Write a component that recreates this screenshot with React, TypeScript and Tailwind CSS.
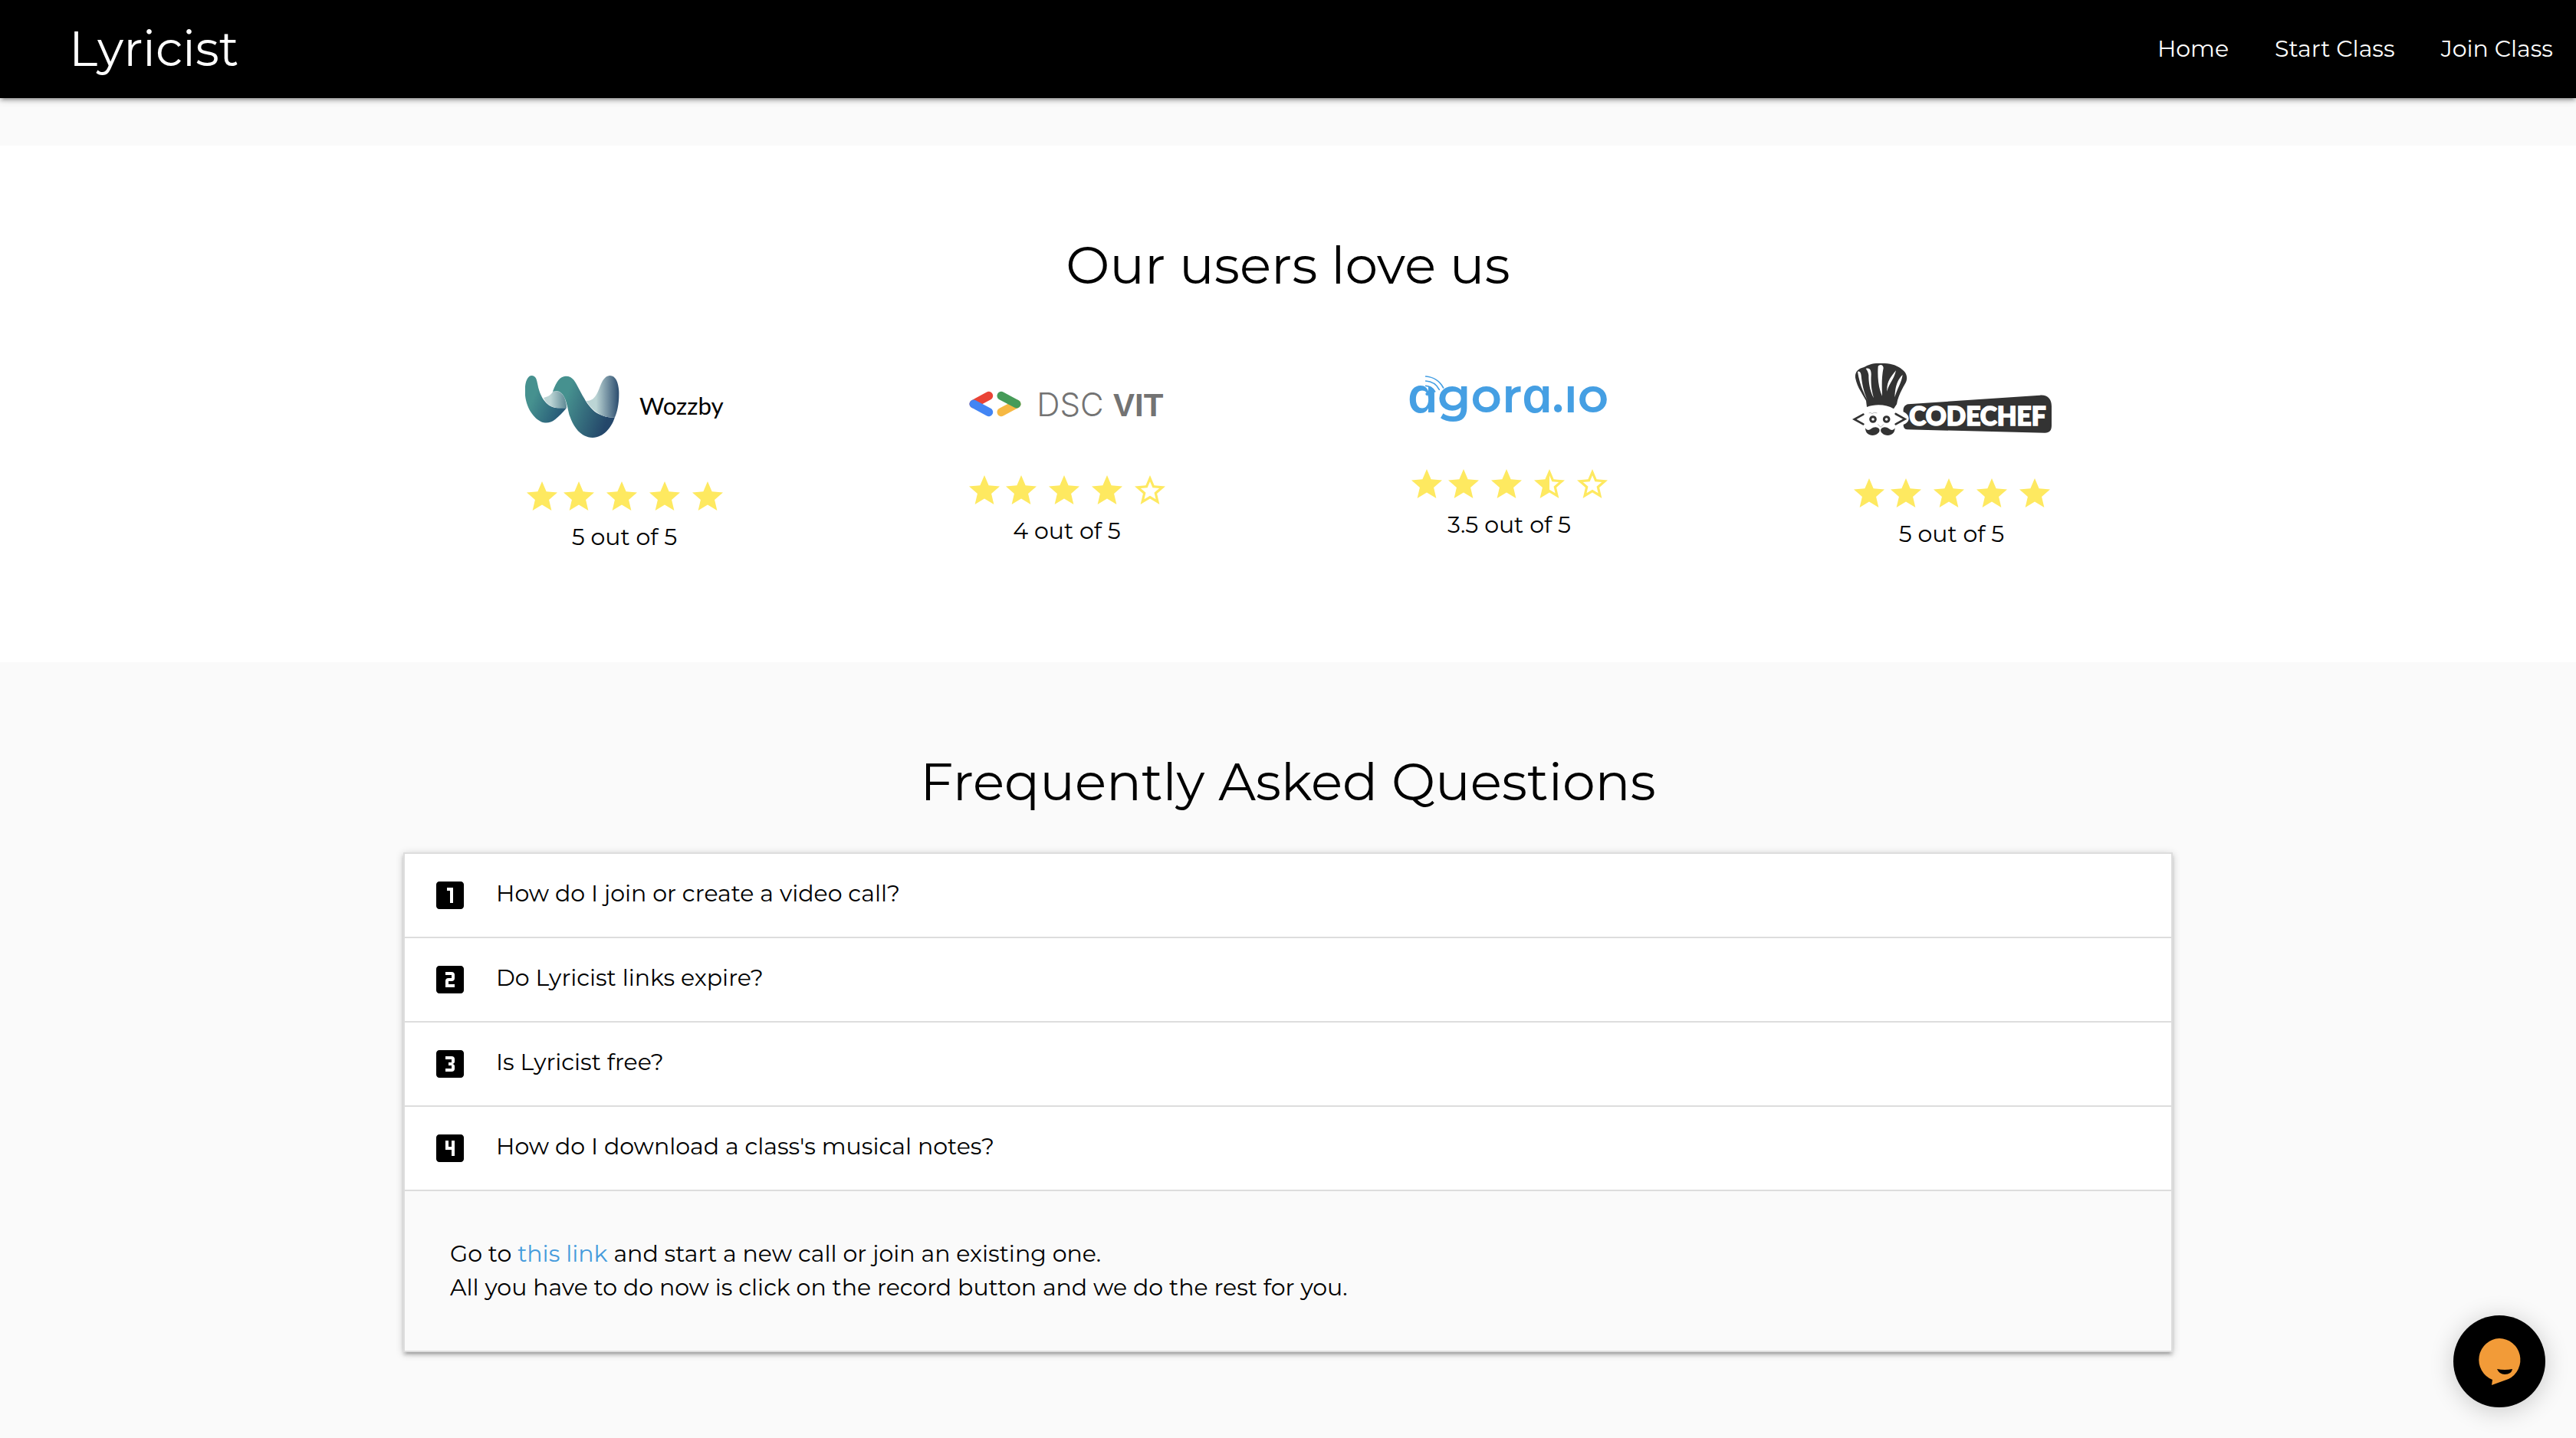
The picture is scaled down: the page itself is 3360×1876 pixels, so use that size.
import { useState } from "react";
import type { ComponentType, ReactNode } from "react";
import {
  MdLooks3,
  MdLooks4,
  MdLooksOne,
  MdLooksTwo,
  MdStar,
  MdStarBorder,
  MdStarHalf,
} from "react-icons/md";

interface Review {
  name: string;
  logo: ReactNode;
  rating: number;
}

interface Question {
  icon: ComponentType<{ className?: string }>;
  title: string;
}

function WozzbyLogo() {
  return (
    <svg viewBox="73 42 780 294" className="w-[260px]" role="img" aria-label="Wozzby">
      <defs>
        <linearGradient id="wz-left" x1="0" y1="0" x2="1" y2="0.5">
          <stop offset="0.35" stopColor="#46918f" />
          <stop offset="1" stopColor="#285c78" />
        </linearGradient>
        <linearGradient id="wz-main" x1="0" y1="0" x2="1" y2="0.35">
          <stop offset="0.3" stopColor="#46918f" />
          <stop offset="1" stopColor="#24476a" />
        </linearGradient>
        <linearGradient id="wz-light" x1="0" y1="0" x2="1" y2="0">
          <stop offset="0.3" stopColor="#bcd5d5" />
          <stop offset="1" stopColor="#5d8894" />
        </linearGradient>
        <linearGradient id="wz-right" x1="0" y1="0" x2="1" y2="0">
          <stop offset="0.3" stopColor="#bcd5d5" />
          <stop offset="1" stopColor="#2b4c6e" />
        </linearGradient>
      </defs>
      <path
        d="M72 150C72 110 85 90 98 90C115 90 118 105 122 125C128 160 150 215 200 217L235 217C220 235 205 250 190 262C175 275 160 276 145 274C110 265 72 215 72 150Z"
        fill="url(#wz-left)"
      />
      <path
        d="M145 177C165 172 175 165 183 150C205 148 222 158 230 185C234 200 236 210 235 217L205 217C175 217 155 200 145 177Z"
        fill="url(#wz-light)"
      />
      <path
        d="M181 152C195 115 208 93 232 92C260 92 270 115 285 145C305 185 330 225 360 240C385 252 405 256 424 253C410 295 380 332 337 333C290 333 262 290 248 250C238 220 235 165 205 152C195 149 188 150 181 152Z"
        fill="url(#wz-main)"
      />
      <path
        d="M312 189C345 190 355 160 367 130C378 100 392 90 405 90C430 90 441 125 440 165C440 200 433 235 424 253C400 258 370 247 350 232C335 220 322 205 312 189Z"
        fill="url(#wz-right)"
      />
      <text x="520" y="243" fontSize="94" className="font-[Lato,sans-serif]">
        Wozzby
      </text>
    </svg>
  );
}

function DscLogo() {
  return (
    <svg viewBox="64 42 780 270" className="w-[260px]" role="img" aria-label="DSC VIT">
      <g strokeWidth="33" strokeLinecap="round">
        <path d="M147 169L88 201" stroke="#ea4335" />
        <path d="M88 201L147 233" stroke="#4285f4" />
        <path d="M256 201L196 233" stroke="#f6b843" />
        <path d="M196 169L256 201" stroke="#469b58" />
      </g>
      <text x="335" y="250" fontSize="126" fill="#737373" className="font-[Inter,sans-serif] font-light">
        DSC
      </text>
      <text x="634" y="250" fontSize="126" fill="#737373" className="font-['Liberation_Sans',sans-serif] font-bold">
        VIT
      </text>
    </svg>
  );
}

function AgoraLogo() {
  return (
    <svg viewBox="85 42 780 246" className="w-[260px] overflow-visible" role="img" aria-label="agora.io">
      <text x="76" y="235" fontSize="188" fill="#459fe3" className="font-[Montserrat,sans-serif] font-semibold">
        <tspan className="font-[Inter,sans-serif] [font-feature-settings:'cv11']">a</tspan>
        gor
        <tspan className="font-[Inter,sans-serif] [font-feature-settings:'cv11']">a</tspan>
        .ıo
      </text>
      <g fill="none" strokeLinecap="round">
        <path d="M147 120A60 60 0 0 1 192 150" stroke="#fff" strokeWidth="14" />
        <path d="M147 93A86 86 0 0 1 216 138" stroke="#459fe3" strokeWidth="5" />
        <path d="M147 111A64 64 0 0 1 200 145" stroke="#459fe3" strokeWidth="5" />
        <path d="M147 130A45 45 0 0 1 183 153" stroke="#459fe3" strokeWidth="5" />
      </g>
      <circle cx="152" cy="162" r="6" fill="#459fe3" />
    </svg>
  );
}

function CodechefLogo() {
  return (
    <svg viewBox="76 72 780 282" className="w-[260px]" role="img" aria-label="CodeChef">
      <g fill="#333">
        <path d="M88 128C86 105 100 93 120 88C140 78 150 72 180 72C220 70 250 78 270 95C290 108 294 130 285 148C270 175 255 200 250 232L238 250C210 232 165 230 133 243L130 218C115 190 95 165 88 128Z" />
        <path d="M295 232L810 197C840 194 856 212 856 240L856 315C856 335 848 344 830 344L290 331C280 330 276 322 276 312C304 302 304 275 276 262C274 245 282 234 295 232Z" />
        <path d="M127 325C127 345 140 354 155 354C172 353 186 342 182 330C176 319 160 319 150 328C142 335 133 335 127 325Z" />
        <path d="M243 325C243 345 230 354 215 354C198 353 184 342 188 330C194 319 210 319 220 328C228 335 237 335 243 325Z" />
      </g>
      <g fill="#fff">
        <path d="M97 105C104 100 110 108 111 120C114 150 120 185 138 222C118 185 104 150 97 105Z" />
        <path d="M129 93C145 88 151 100 150 118C148 155 152 180 160 208C142 175 140 140 140 118C138 105 134 98 129 93Z" />
        <path d="M177 84C183 75 197 76 198 90C190 130 192 165 193 200C178 170 174 120 177 84Z" />
        <path d="M247 100C228 125 210 140 212 182C220 150 240 135 247 100Z" />
        <path d="M273 117C268 150 254 165 242 205C243 165 253 135 273 117Z" />
      </g>
      <g fill="none" stroke="#333" strokeLinecap="round">
        <path d="M119 272L84 291L119 310M246 270L282 290L246 310" strokeWidth="8" />
        <circle cx="157" cy="291" r="10" strokeWidth="9" />
        <circle cx="210" cy="291" r="10" strokeWidth="9" />
        <path d="M176 311L188 322L198 311M142 266Q148 262 153 269Q160 262 172 266" strokeWidth="1" />
      </g>
      <text x="299" y="315" fontSize="100" fill="#fff" stroke="#fff" strokeWidth="5" className="font-[Lato,sans-serif] font-black">
        CODECHEF
      </text>
    </svg>
  );
}

const reviews: Review[] = [
  { name: "Wozzby", logo: <WozzbyLogo />, rating: 5 },
  { name: "DSC VIT", logo: <DscLogo />, rating: 4 },
  { name: "agora.io", logo: <AgoraLogo />, rating: 3.5 },
  { name: "CodeChef", logo: <CodechefLogo />, rating: 5 },
];

const questions: Question[] = [
  { icon: MdLooksOne, title: "How do I join or create a video call?" },
  { icon: MdLooksTwo, title: "Do Lyricist links expire?" },
  { icon: MdLooks3, title: "Is Lyricist free?" },
  { icon: MdLooks4, title: "How do I download a class's musical notes?" },
];

function Star({ value }: { value: number }) {
  if (value >= 1) return <MdStar className="size-12" />;
  if (value > 0) return <MdStarHalf className="size-12" />;
  return <MdStarBorder className="size-12" />;
}

function ReviewCard({ review }: { review: Review }) {
  return (
    <div className="flex flex-col items-center">
      {review.logo}
      <div className="mt-[52px] flex gap-2 text-[#fee960]">
        {/* the first two stars sit tight together */}
        <div className="flex">
          <Star value={review.rating} />
          <Star value={review.rating - 1} />
        </div>
        <Star value={review.rating - 2} />
        <Star value={review.rating - 3} />
        <Star value={review.rating - 4} />
      </div>
      <p className="mt-[7px]">{review.rating} out of 5</p>
    </div>
  );
}

function Faq() {
  const [open, setOpen] = useState(3);

  return (
    <div className="border-x-2 border-t-2 border-[#ddd] shadow-[0_4px_4px_rgba(0,0,0,0.14),0_6px_2px_-4px_rgba(0,0,0,0.12),0_2px_10px_rgba(0,0,0,0.2)]">
      {questions.map((q, i) => (
        <div key={q.title}>
          <button
            type="button"
            aria-expanded={open === i}
            onClick={() => setOpen(open === i ? -1 : i)}
            className="flex h-[110px] w-full cursor-pointer items-start border-b-2 border-[#ddd] bg-white px-[29px] pt-[30px] text-left"
          >
            <span className="mr-[30px] flex w-[60px] justify-center">
              <q.icon className="size-12" />
            </span>
            {q.title}
          </button>
          {open === i && (
            <div className="border-b-2 border-[#ddd] bg-[#fafafa] px-[59px] py-[60px]">
              <p>
                Go to <a href="#start" className="text-[#459bdc]">this link</a> and start a new call or join an existing one.
                <br />
                All you have to do now is click on the record button and we do the rest for you.
              </p>
            </div>
          )}
        </div>
      ))}
    </div>
  );
}

function App() {
  return (
    <div className="min-h-screen bg-[#fafafa] font-[Montserrat,Inter,sans-serif] text-[30px] leading-11 text-black">
      <header className="relative flex h-32 items-center justify-between bg-black pl-[90px] text-white shadow-[0_4px_4px_rgba(0,0,0,0.14),0_6px_2px_-4px_rgba(0,0,0,0.12),0_2px_10px_rgba(0,0,0,0.2)]">
        <a href="#home" className="text-[63px] leading-[128px]">Lyricist</a>
        <nav className="flex leading-[128px]">
          <a href="#home" className="px-[30px]">Home</a>
          <a href="#start" className="px-[30px]">Start Class</a>
          <a href="#join" className="px-[30px]">Join Class</a>
        </nav>
      </header>

      <main className="pt-[62px]">
        <section className="bg-white pt-[118px] pb-[141px]">
          <div className="mx-auto w-[70%] px-[22px]">
            <h2 className="text-center text-[68px] leading-[75px]">Our users love us</h2>
            <div className="mt-[91px] grid grid-cols-4">
              {reviews.map((review) => (
                <ReviewCard key={review.name} review={review} />
              ))}
            </div>
          </div>
        </section>

        <section className="pt-[118px]">
          <div className="mx-auto w-[70%] px-[22px]">
            <h2 className="mb-[55px] text-center text-[68px] leading-[75px]">Frequently Asked Questions</h2>
            <Faq />
          </div>
        </section>
      </main>

      <button
        type="button"
        aria-label="Open chat"
        className="fixed right-10 bottom-10 size-[120px] cursor-pointer rounded-full bg-black shadow-[0_4px_32px_rgba(0,0,0,0.2)]"
      >
        <svg viewBox="0 0 120 120" className="size-full">
          <path d="M60 30A28 28 0 0 1 72 83L50 91L51 84A28 28 0 0 1 60 30Z" fill="#f29b38" />
          <path d="M57 70Q67 72 77 70Q76 77 67 77Q60 77 57 70Z" fill="#000" />
        </svg>
      </button>
    </div>
  );
}

export default App;
